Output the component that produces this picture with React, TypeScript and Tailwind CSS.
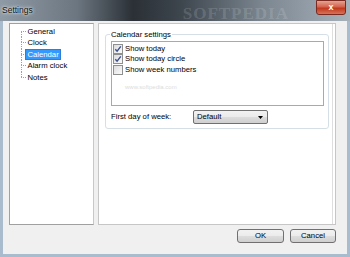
const font = { fontFamily: '"Liberation Sans", Arial, sans-serif' };

function TreeRow({
  label,
  first,
  last,
  selected,
}: {
  label: string;
  first?: boolean;
  last?: boolean;
  selected?: boolean;
}) {
  return (
    <div className="flex h-[11.5px] items-stretch">
      <div className="flex w-[5px] flex-col">
        <div className={`flex-1 ${first ? "" : "border-l border-dotted border-[#a0a0a0]"}`} />
        <div
          className={`flex-1 border-t border-dotted border-[#a0a0a0] ${
            last ? "" : "border-l"
          }`}
        />
      </div>
      <div className="flex items-center">
        <span
          className={`px-[1.5px] leading-[9px] ${
            selected ? "bg-[#3399ff] text-white outline outline-1 outline-[#2b7fd6]" : "text-black"
          }`}
        >
          {label}
        </span>
      </div>
    </div>
  );
}

function Check({ label, checked }: { label: string; checked?: boolean }) {
  return (
    <div className="flex h-[10.5px] items-center gap-[2px]">
      <div className="flex h-[10px] w-[10px] items-center justify-center border border-[#8e8f8f] bg-[linear-gradient(135deg,#dcdcdc,#fbfbfb)]">
        {checked && (
          <svg width="8" height="8" viewBox="0 0 8 8">
            <path d="M1.3 4.2 L3.1 6.2 L6.8 1.3" fill="none" stroke="#3c4f8c" strokeWidth="1.4" />
          </svg>
        )}
      </div>
      <span>{label}</span>
    </div>
  );
}

export default function App() {
  return (
    <div
      className="flex h-[257px] w-[350px] flex-col overflow-hidden bg-[#a9bccd] text-[7.7px] text-black"
      style={font}
    >
      {/* title bar */}
      <div className="relative flex h-[21px] shrink-0 items-start bg-[linear-gradient(90deg,#8e9aa5_0%,#6c7680_22%,#2a3036_38%,#3e464e_52%,#7b8690_75%,#a6b1ba_100%)]">
        <span className="ml-[2px] mt-[4px] text-[8.5px] text-[#111] [text-shadow:0_0_4px_#e8eef3,0_0_2px_#e8eef3]">
          Settings
        </span>
        <span
          className="ml-[150px] mt-[1px] text-[17px] font-bold tracking-[1px] text-white/15"
          style={{ fontFamily: '"Liberation Serif", serif' }}
        >
          SOFTPEDIA
        </span>
        <div className="absolute right-[4px] top-0 flex h-[15px] w-[30px] items-center justify-center rounded-b-[3px] border border-[#7a2a20] bg-[linear-gradient(180deg,#e5a394_0%,#d3634d_45%,#c1381c_55%,#d6735a_100%)]">
          <span className="text-[9px] font-bold leading-none text-white">x</span>
        </div>
      </div>

      {/* client */}
      <div className="mx-[3px] mb-[3px] flex flex-1 flex-col bg-[#f0f0f0] pl-[6px] pr-[11px] pt-[2px]">
        <div className="flex h-[202px] gap-[4px]">
          {/* tree */}
          <div className="w-[87px] border border-[#a0a0a0] border-r-[#c8c8c8] bg-white pl-[11px] pt-[1.5px]">
            <TreeRow label="General" first />
            <TreeRow label="Clock" />
            <TreeRow label="Calendar" selected />
            <TreeRow label="Alarm clock" />
            <TreeRow label="Notes" last />
          </div>

          {/* page */}
          <div className="flex-1 border border-[#c6c6c6] bg-white px-[6px] pt-[10px] shadow-[inset_-2px_0_0_#fff,inset_-3px_0_0_#dedede]">
            <div className="relative w-[224px] rounded-[3px] border border-[#d5dfe5] px-[5px] pb-[4px] pt-[6px]">
              <span className="absolute left-[4px] top-[-5px] bg-white px-[1px] leading-[9px]">
                Calendar settings
              </span>
              <div className="h-[65px] w-[213px] border border-[#a5a9b0] bg-white pl-[1px] pt-[1.5px]">
                <Check label="Show today" checked />
                <Check label="Show today circle" checked />
                <Check label="Show week numbers" />
                <div className="ml-[12px] mt-[8px] text-[6px] text-[#dcdcdc]">www.softpedia.com</div>
              </div>
              <div className="mt-[4px] flex h-[14px] items-center">
                <span className="w-[82px]">First day of week:</span>
                <div className="flex h-[14px] w-[75px] items-center justify-between rounded-[2px] border border-[#707070] bg-[linear-gradient(180deg,#f2f2f2_0%,#ebebeb_50%,#dddddd_51%,#cfcfcf_100%)] pl-[3px] pr-[4px]">
                  <span>Default</span>
                  <svg width="5" height="3" viewBox="0 0 5 3">
                    <path d="M0 0 H5 L2.5 3 Z" fill="#000" />
                  </svg>
                </div>
              </div>
            </div>
          </div>
        </div>

        {/* buttons */}
        <div className="mt-[4px] flex justify-end gap-[6px]">
          <button className="flex h-[14px] w-[47px] items-center justify-center rounded-[3px] border border-[#707070] bg-[linear-gradient(180deg,#f2f2f2_0%,#ebebeb_50%,#dddddd_51%,#cfcfcf_100%)] text-[7.7px]">
            OK
          </button>
          <button className="flex h-[14px] w-[46px] items-center justify-center rounded-[3px] border border-[#707070] bg-[linear-gradient(180deg,#f2f2f2_0%,#ebebeb_50%,#dddddd_51%,#cfcfcf_100%)] text-[7.7px]">
            Cancel
          </button>
        </div>
      </div>
    </div>
  );
}
